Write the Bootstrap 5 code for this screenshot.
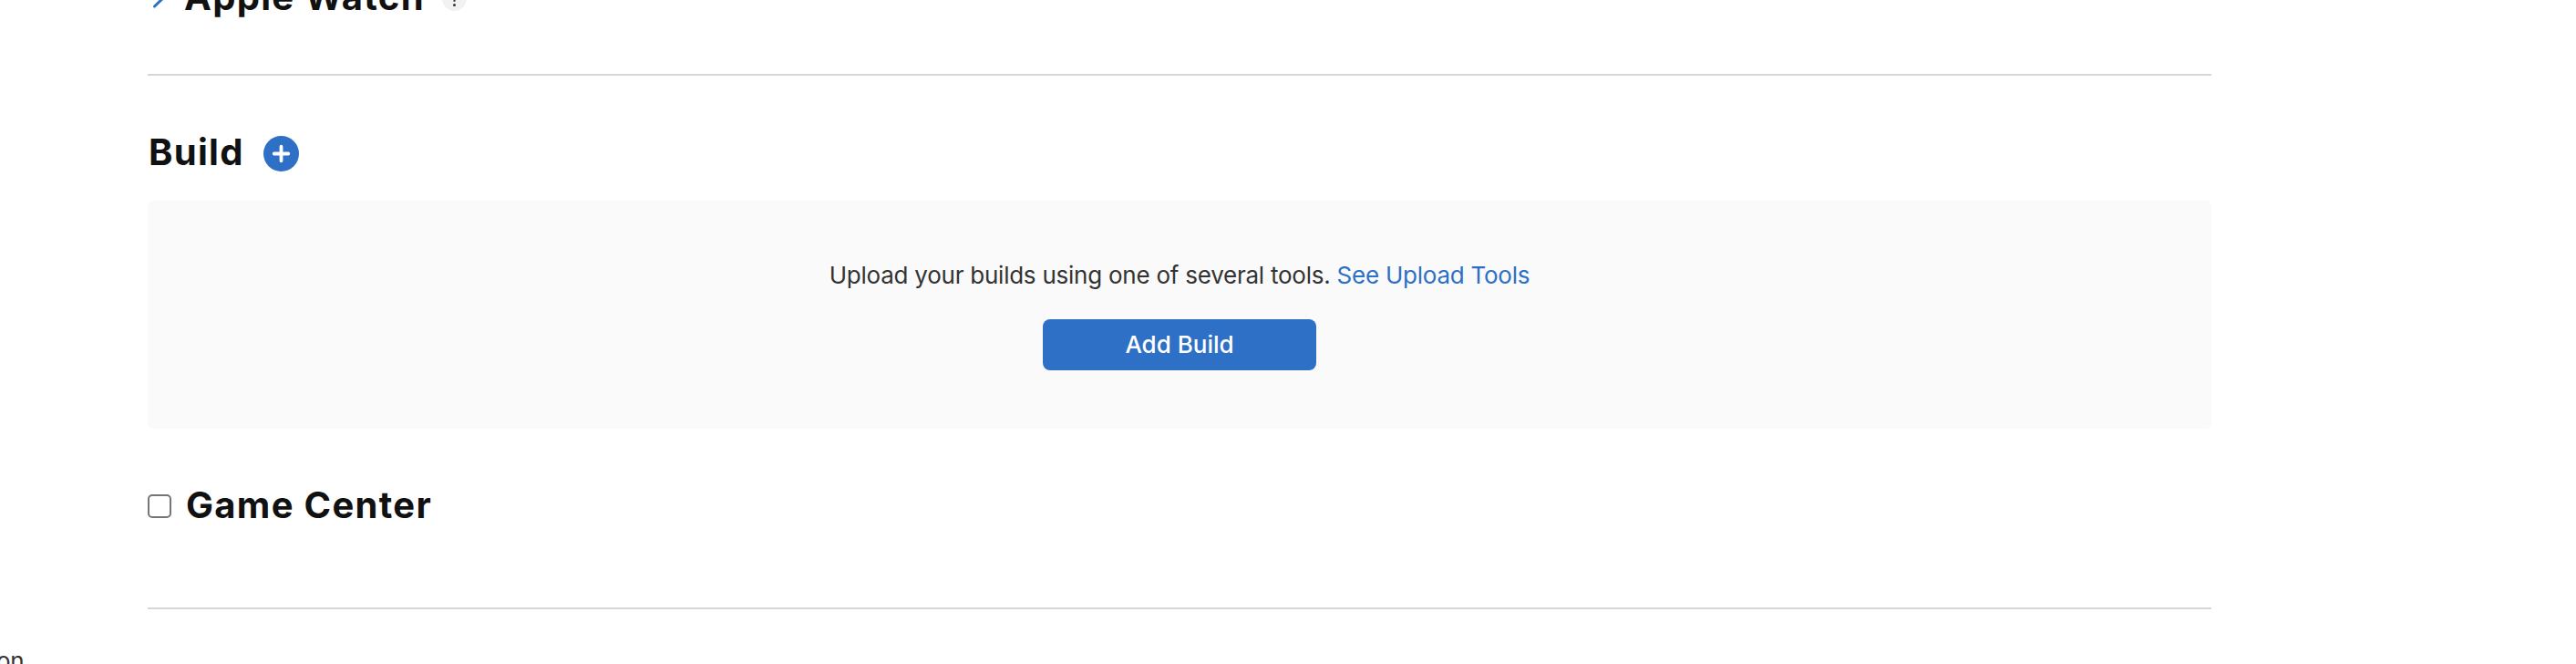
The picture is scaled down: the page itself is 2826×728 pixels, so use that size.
<!DOCTYPE html>
<html lang="en">
<head>
<meta charset="utf-8">
<meta name="viewport" content="width=device-width, initial-scale=1">
<title>App version</title>
<link href="https://cdn.jsdelivr.net/npm/bootstrap@5.3.0/dist/css/bootstrap.min.css" rel="stylesheet">
<style>
  body { font-family: Inter, "Liberation Sans", sans-serif; color: #333; background: #fff; font-size: 26px; height: 728px; }
  .side { width: 162px; height: 728px; padding-top: 709px; }
  .side-link { line-height: 32px; margin-left: -4px; color: #333; letter-spacing: -.3px; }
  .content { width: 2264px; }
  .title { font-size: 40px; line-height: 50px; height: 50px; font-weight: 700; color: #111; letter-spacing: 1.3px; margin: 0; white-space: nowrap; }
  .watch { margin-top: -28px; height: 109px; }
  .chevron { width: 18px; height: 30px; margin: 9px 18px 0 4px; }
  .help { width: 27px; height: 27px; margin: 13px 0 0 19px; }
  .divider { height: 2px; background: #d6d6d6; }
  .build-head { padding: 59px 0 0 1px; height: 137px; }
  .plus { width: 39px; height: 39px; margin: 7px 0 0 21px; }
  .panel { height: 250px; background: #fafafa; border-radius: 6px; padding-top: 66px; }
  .hint { line-height: 32px; margin-bottom: 32px; letter-spacing: -.24px; white-space: nowrap; }
  .hint a { color: #2d70c5; }
  .btn-add { width: 300px; height: 56px; background: #2d70c5; color: #fff; border: 0; border-radius: 8px; font-size: 26px; line-height: 32px; font-weight: 500; padding: 0; }
  .btn-add:hover { background: #2563b4; color: #fff; }
  .game { padding-top: 59px; height: 196px; }
  .game .form-check-input { width: 26px; height: 26px; margin: 13px 16px 0 0; border: 2px solid #757575; border-radius: 5px; float: none; }
</style>
</head>
<body class="overflow-hidden">
<div class="d-flex">
  <aside class="side flex-shrink-0 overflow-hidden"><a class="side-link d-block text-decoration-none" href="#">on</a></aside>
  <main class="content flex-shrink-0">
    <section class="watch d-flex align-items-start">
      <svg class="chevron" viewBox="0 0 18 30" fill="none" stroke="#2d70c5" stroke-width="3" stroke-linecap="round"><path d="M3.5 3l12 11.5L3.5 26"/></svg>
      <h2 class="title">Apple Watch</h2>
      <svg class="help" viewBox="0 0 27 27"><circle cx="13.5" cy="13.5" r="13.5" fill="#f2f2f2"/><path d="M9.8 10.2c0-5.2 7.7-4.8 7.5-.3-.1 2.8-3.8 2.8-3.8 6v.8" fill="none" stroke="#333" stroke-width="2"/><circle cx="13.5" cy="20.4" r="1.5" fill="#333"/></svg>
    </section>
    <div class="divider"></div>
    <section>
      <div class="build-head d-flex align-items-start">
        <h2 class="title">Build</h2>
        <svg class="plus" viewBox="0 0 39 39"><circle cx="19.5" cy="19.5" r="19.5" fill="#2d70c5"/><path d="M19.5 11.7v15.6M11.7 19.5h15.6" stroke="#fff" stroke-width="3.8" stroke-linecap="round"/></svg>
      </div>
      <div class="panel d-flex flex-column align-items-center">
        <p class="hint"><span>Upload your builds using one of several tools.</span> <a class="text-decoration-none" href="#">See Upload Tools</a></p>
        <button class="btn btn-add" type="button">Add Build</button>
      </div>
    </section>
    <section class="game d-flex align-items-start">
      <input class="form-check-input flex-shrink-0" type="checkbox" id="gameCenter">
      <label class="title" for="gameCenter">Game Center</label>
    </section>
    <div class="divider"></div>
  </main>
</div>
<script src="https://cdn.jsdelivr.net/npm/bootstrap@5.3.0/dist/js/bootstrap.bundle.min.js"></script>
</body>
</html>
